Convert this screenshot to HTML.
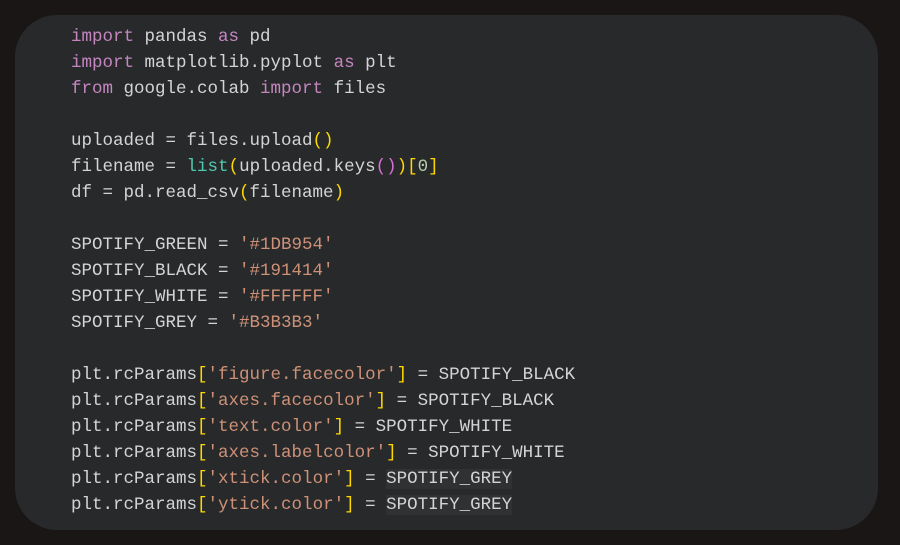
<html><head><style>
body{margin:0;background:#1a1616;width:900px;height:545px;overflow:hidden}
.card{position:absolute;left:15px;top:15px;width:863px;height:515px;background:#27292b;border-radius:42px}
pre{position:absolute;left:71px;top:24px;margin:0;font-family:"Liberation Mono",monospace;font-size:17.5px;line-height:26px;color:#d4d4d4}
.k{color:#c586c0}.s{color:#ce9178}.b{color:#ffd700}.p{color:#da70d6}.f{color:#4ec9b0}.n{color:#b5cea8}
.h{background:#2f3133}
</style></head><body><div class="card"></div>
<pre><span class="k">import</span> pandas <span class="k">as</span> pd
<span class="k">import</span> matplotlib.pyplot <span class="k">as</span> plt
<span class="k">from</span> google.colab <span class="k">import</span> files

uploaded = files.upload<span class="b">()</span>
filename = <span class="f">list</span><span class="b">(</span>uploaded.keys<span class="p">()</span><span class="b">)[</span><span class="n">0</span><span class="b">]</span>
df = pd.read_csv<span class="b">(</span>filename<span class="b">)</span>

SPOTIFY_GREEN = <span class="s">'#1DB954'</span>
SPOTIFY_BLACK = <span class="s">'#191414'</span>
SPOTIFY_WHITE = <span class="s">'#FFFFFF'</span>
SPOTIFY_GREY = <span class="s">'#B3B3B3'</span>

plt.rcParams<span class="b">[</span><span class="s">'figure.facecolor'</span><span class="b">]</span> = SPOTIFY_BLACK
plt.rcParams<span class="b">[</span><span class="s">'axes.facecolor'</span><span class="b">]</span> = SPOTIFY_BLACK
plt.rcParams<span class="b">[</span><span class="s">'text.color'</span><span class="b">]</span> = SPOTIFY_WHITE
plt.rcParams<span class="b">[</span><span class="s">'axes.labelcolor'</span><span class="b">]</span> = SPOTIFY_WHITE
plt.rcParams<span class="b">[</span><span class="s">'xtick.color'</span><span class="b">]</span> = <span class="h">SPOTIFY_GREY</span>
plt.rcParams<span class="b">[</span><span class="s">'ytick.color'</span><span class="b">]</span> = <span class="h">SPOTIFY_GREY</span></pre>
</body></html>
